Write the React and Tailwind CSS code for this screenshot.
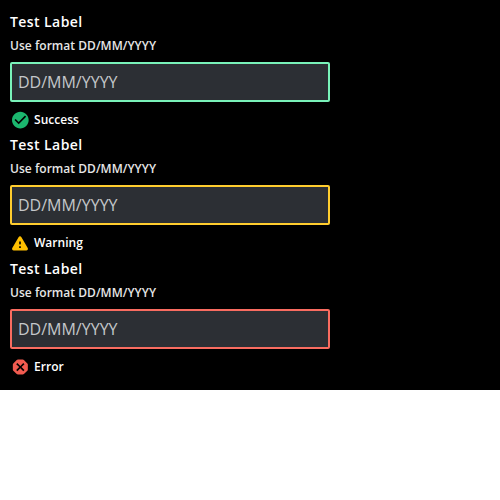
const fields = [
  {
    id: "success",
    message: "Success",
    border: "border-[#79f2b9]",
    icon: (
      <svg viewBox="0 0 24 24" className="size-5 fill-[#1bb66e]">
        <path transform="translate(.4 .1)" d="M12 2C6.48 2 2 6.48 2 12s4.48 10 10 10 10-4.48 10-10S17.52 2 12 2zm-2 15l-5-5 1.41-1.41L10 14.17l7.59-7.59L19 8l-9 9z" />
      </svg>
    ),
  },
  {
    id: "warning",
    message: "Warning",
    border: "border-[#ffcd2e]",
    icon: (
      <svg viewBox="0 0 24 24" className="size-5 fill-[#ffbf00]">
        <path d="M4.47 21h15.06c1.54 0 2.5-1.67 1.73-3L13.73 4.99c-.77-1.33-2.69-1.33-3.46 0L2.74 18c-.77 1.33.19 3 1.73 3zM12 14c-.55 0-1-.45-1-1v-2c0-.55.45-1 1-1s1 .45 1 1v2c0 .55-.45 1-1 1zm1 4h-2v-2h2v2z" />
      </svg>
    ),
  },
  {
    id: "error",
    message: "Error",
    border: "border-[#f96c60]",
    icon: (
      <svg viewBox="0 0 24 24" className="size-5 fill-[#f15b50]">
        <path transform="translate(.4 .1)" d="M14.9 3H9.1c-.53 0-1.04.21-1.42.59l-4.1 4.1C3.21 8.06 3 8.57 3 9.1v5.8c0 .53.21 1.04.59 1.41l4.1 4.1c.37.38.88.59 1.41.59h5.8c.53 0 1.04-.21 1.41-.59l4.1-4.1c.38-.37.59-.88.59-1.41V9.1c0-.53-.21-1.04-.59-1.41l-4.1-4.1C15.94 3.21 15.43 3 14.9 3zM15.54 16.95L12 13.41l-3.54 3.54-1.41-1.41L10.59 12 7.05 8.46l1.41-1.41L12 10.59l3.54-3.54 1.41 1.41L13.41 12l3.54 3.54-1.41 1.41z" />
      </svg>
    ),
  },
];

function Field({ id, message, border, icon }) {
  return (
    <div className="flex h-[123.4px] flex-col">
      <label htmlFor={id} className="text-sm leading-6 font-semibold tracking-[0.42px] text-white">
        Test Label
      </label>
      <p className="h-7 text-xs leading-6 font-semibold tracking-[0.03px] text-[#e6e6e6]">Use format DD/MM/YYYY</p>
      <input
        id={id}
        placeholder="DD/MM/YYYY"
        className={`h-10 w-80 shrink-0 rounded-[2px] border-2 bg-[#2c2f34] px-1.5 text-base text-white outline-none placeholder:text-[#c4c7ca] ${border}`}
      />
      <div className="mt-2 flex h-5 items-center gap-1 text-xs font-semibold tracking-[0.03px] text-white">
        {icon}
        <span>{message}</span>
      </div>
    </div>
  );
}

export default function App() {
  return (
    <main className="h-[390px] bg-black px-2.5 pt-2.5 font-['Open_Sans',sans-serif]">
      {fields.map((field) => (
        <Field key={field.id} {...field} />
      ))}
    </main>
  );
}
